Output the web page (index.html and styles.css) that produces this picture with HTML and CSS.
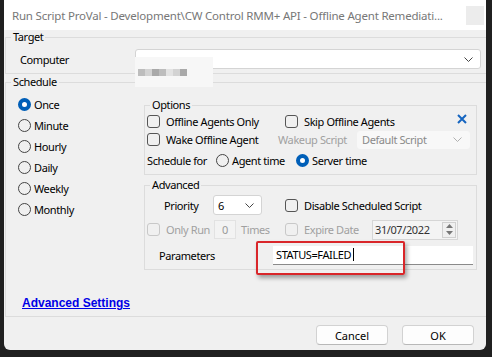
FILE: index.html
```html
<!DOCTYPE html>
<html lang="en">
<head>
    <meta charset="UTF-8">
    <title>Run Script</title>
    <link rel="stylesheet" href="styles.css">
</head>
<body>

<div class="window">
  <div class="titlebar">
    <span class="title">Run Script ProVal - Development\CW Control RMM+ API - Offline Agent Remediati...</span>
    <span class="close"></span>
  </div>

  <fieldset class="group target">
    <legend>Target</legend>
    <div class="computer-row">
      <span class="computer-label">Computer</span>
      <div class="combo computer-combo">
        <svg class="chev" width="9" height="5" viewBox="0 0 9 5"><path d="M0.5 0.5 L4.5 4.5 L8.5 0.5" fill="none" stroke="#444"/></svg>
      </div>
    </div>
    <!-- blurred computer name -->
    <span class="redacted"><i class="g1"></i><i class="g2"></i><i class="g3"></i><i class="g1"></i><i class="g4"></i><i class="g2"></i><i class="g3"></i></span>
  </fieldset>

  <fieldset class="group schedule">
    <legend>Schedule</legend>
    <div class="schedule-body">
      <div class="freq">
        <div class="opt"><span class="radio on"></span>Once</div>
        <div class="opt"><span class="radio"></span>Minute</div>
        <div class="opt"><span class="radio"></span>Hourly</div>
        <div class="opt"><span class="radio"></span>Daily</div>
        <div class="opt"><span class="radio"></span>Weekly</div>
        <div class="opt"><span class="radio"></span>Monthly</div>
      </div>

      <div class="panels">
        <fieldset class="group options">
          <legend>Options</legend>
          <div class="row r1">
            <div class="item w-offline"><span class="check"></span>Offline Agents Only</div>
            <div class="item grow"><span class="check"></span>Skip Offline Agents</div>
            <svg class="clear-x" width="10" height="10" viewBox="0 0 10 10"><path d="M1 1 L9 9 M9 1 L1 9" stroke="#1565c0" stroke-width="2"/></svg>
          </div>
          <div class="row r2">
            <div class="item w-wake"><span class="check"></span>Wake Offline Agent</div>
            <div class="item w-wakeup muted">Wakeup Script</div>
            <div class="combo script-combo">
              <span>Default Script</span>
              <svg class="chev" width="9" height="5" viewBox="0 0 9 5"><path d="M0.5 0.5 L4.5 4.5 L8.5 0.5" fill="none" stroke="#b0b0b0"/></svg>
            </div>
          </div>
          <div class="row r3">
            <div class="item w-schedfor">Schedule for</div>
            <div class="item w-agent"><span class="radio"></span>Agent time</div>
            <div class="item"><span class="radio on"></span>Server time</div>
          </div>
        </fieldset>

        <fieldset class="group advanced">
          <legend>Advanced</legend>
          <div class="row a1">
            <div class="item w-priority">Priority</div>
            <div class="combo priority-combo">
              <span>6</span>
              <svg class="chev" width="9" height="5" viewBox="0 0 9 5"><path d="M0.5 0.5 L4.5 4.5 L8.5 0.5" fill="none" stroke="#444"/></svg>
            </div>
            <div class="item disable-item"><span class="check"></span>Disable Scheduled Script</div>
          </div>
          <div class="row a2">
            <div class="item w-onlyrun muted"><span class="check off"></span>Only Run</div>
            <div class="times-box">0</div>
            <div class="item w-times muted">Times</div>
            <div class="item w-expire muted"><span class="check off"></span>Expire Date</div>
            <div class="date-box">
              <span>31/07/2022</span>
              <div class="spinner">
                <svg width="7" height="4" viewBox="0 0 7 4"><path d="M0 4 L3.5 0 L7 4 Z" fill="#777"/></svg>
                <svg width="7" height="4" viewBox="0 0 7 4"><path d="M0 0 L3.5 4 L7 0 Z" fill="#777"/></svg>
              </div>
            </div>
          </div>
          <div class="row a3">
            <div class="item w-params">Parameters</div>
            <div class="text-box">STATUS=FAILED<span class="caret"></span></div>
          </div>
        </fieldset>
      </div>
    </div>
    <a class="adv-link" href="#">Advanced Settings</a>
  </fieldset>

  <div class="buttons">
    <button class="btn">Cancel</button>
    <button class="btn">OK</button>
  </div>

  <div class="highlight"></div>
</div>

</body>
</html>
```

FILE: styles.css
```css
* {
  box-sizing: border-box;
}

body {
  margin: 0;
  background-color: #202020;
  font-family: "Noto Sans", "Segoe UI", sans-serif;
  font-size: 11px;
  letter-spacing: -0.4px;
  color: #000;
}

.window {
  position: relative;
  margin-left: 4px;
  width: 482px;
  height: 350px;
  background-color: #f0f0f0;
  border-radius: 0 0 6px 6px;
  overflow: hidden;
}

/* title bar */
.titlebar {
  height: 30px;
  background-color: #fff;
  display: flex;
  align-items: center;
  padding-left: 8px;
}

.title {
  flex: 1;
  color: #777;
  font-size: 11.5px;
  letter-spacing: -0.2px;
  white-space: nowrap;
  overflow: hidden;
}

.close {
  width: 18px;
  height: 19px;
  margin-right: 2px;
  background-color: #ececec;
}

/* group boxes */
.group {
  margin: 0;
  padding: 0;
  min-width: 0;
  border: 1px solid #dcdcdc;
}

.group legend {
  margin-left: 5px;
  padding: 0 2px;
  line-height: 14px;
}

.target,
.schedule {
  margin-left: 1px;
  border-right: none;
}

.target {
  position: relative;
  padding: 5px 0 4px 0;
}

.schedule {
  margin-top: 1px;
  padding-bottom: 6px;
}

.computer-row {
  display: flex;
  align-items: center;
}

.computer-label {
  width: 129px;
  padding-left: 14px;
}

.combo {
  display: flex;
  align-items: center;
  justify-content: space-between;
  height: 20px;
  padding: 0 7px 0 4px;
  background-color: #fff;
  border: 1px solid #d4d4d4;
  border-radius: 3px;
}

.combo .chev {
  margin-left: auto;
}

.computer-combo {
  width: 346px;
  margin-left: auto;
  margin-right: 5px;
}

.redacted {
  position: absolute;
  left: 129px;
  top: 13px;
  width: 78px;
  height: 30px;
  background-color: #f7f7f7;
  display: flex;
  align-items: center;
  padding-left: 3px;
}

.redacted i {
  display: block;
  width: 7px;
  height: 7px;
}

.redacted .g1 { background-color: #bdbdbd; }
.redacted .g2 { background-color: #d3d3d3; }
.redacted .g3 { background-color: #a9a9a9; }
.redacted .g4 { background-color: #e3e3e3; }

/* schedule */
.schedule-body {
  display: flex;
}

.freq {
  width: 138px;
  padding: 5px 0 0 12px;
}

.opt {
  display: flex;
  align-items: center;
  height: 21px;
}

.radio {
  width: 13px;
  height: 13px;
  margin-right: 3px;
  border: 1px solid #444;
  border-radius: 50%;
  flex-shrink: 0;
}

.radio.on {
  border: 4px solid #005fb8;
  background-color: #fff;
}

.check {
  width: 13px;
  height: 13px;
  margin-right: 6px;
  border: 1px solid #555;
  border-radius: 3px;
  flex-shrink: 0;
}

.check.off {
  border-color: #c8c8c8;
}

.muted {
  color: #a0a0a0;
}

.panels {
  width: 333px;
  margin-top: 9px;
}

.row {
  display: flex;
  align-items: center;
  padding-left: 2px;
}

.item {
  display: flex;
  align-items: center;
  white-space: nowrap;
}

.grow {
  flex: 1;
}

.options {
  padding-bottom: 3px;
}

.r1 { height: 18px; padding-right: 9px; }
.r2 { height: 19px; }
.r3 { height: 22px; }

.clear-x {
  margin-bottom: 4px;
}

.w-offline { width: 138px; }
.w-wake { width: 131px; }
.w-wakeup { width: 79px; }
.w-schedfor { width: 69px; }
.w-agent { width: 80px; }

.script-combo {
  width: 113px;
  height: 18px;
  background-color: #f8f8f8;
  border-color: #f8f8f8;
  color: #8a8a8a;
}

.advanced {
  margin-top: 3px;
  padding-bottom: 0;
}

.a1 { height: 26px; }
.a2 { height: 23px; }
.a3 { height: 28px; }

.w-priority {
  width: 66px;
  padding-left: 17px;
}

.priority-combo {
  width: 49px;
  padding-left: 4px;
}

.disable-item {
  margin-left: 23px;
}

.w-onlyrun { width: 67px; }

.times-box {
  width: 22px;
  height: 19px;
  line-height: 17px;
  text-align: center;
  color: #999;
  background-color: #f3f3f3;
  border: 1px solid #e2e2e2;
}

.w-times {
  width: 49px;
  padding-left: 5px;
}

.w-expire { width: 87px; }

.date-box {
  display: flex;
  align-items: center;
  justify-content: space-between;
  width: 86px;
  height: 20px;
  padding: 0 1px 0 2px;
  color: #333;
  background-color: #f4f4f4;
  border: 1px solid #d6d6d6;
}

.spinner {
  display: flex;
  flex-direction: column;
  align-items: center;
  justify-content: space-around;
  width: 14px;
  height: 16px;
  border: 1px solid #d0d0d0;
  background-color: #f0f0f0;
}

.w-params {
  width: 126px;
  padding-left: 12px;
}

.text-box {
  display: flex;
  align-items: center;
  width: 200px;
  height: 19px;
  padding-left: 3px;
  background-color: #fff;
  border-bottom: 1px solid #8a8a8a;
}

.caret {
  width: 1px;
  height: 13px;
  margin-left: 2px;
  background-color: #000;
}

.adv-link {
  display: block;
  width: max-content;
  margin: 26px 0 0 16px;
  font-family: "Liberation Sans", Arial, sans-serif;
  font-size: 12px;
  font-weight: bold;
  letter-spacing: 0;
  line-height: 14px;
  color: #0000e6;
  text-decoration: underline;
}

/* bottom buttons */
.buttons {
  display: flex;
  justify-content: flex-end;
  gap: 14px;
  padding: 8px 12px 0 0;
}

.btn {
  width: 72px;
  height: 20px;
  font-family: inherit;
  font-size: 11px;
  letter-spacing: 0;
  background-color: #fdfdfd;
  border: 1px solid #d2d2d2;
  border-bottom-color: #b8b8b8;
  border-radius: 4px;
}

/* red annotation box */
.highlight {
  position: absolute;
  left: 252px;
  top: 241px;
  width: 149px;
  height: 34px;
  border: 2px solid #d9262a;
  border-radius: 2px;
  box-shadow: 2px 3px 4px rgba(0, 0, 0, 0.35);
}
```
